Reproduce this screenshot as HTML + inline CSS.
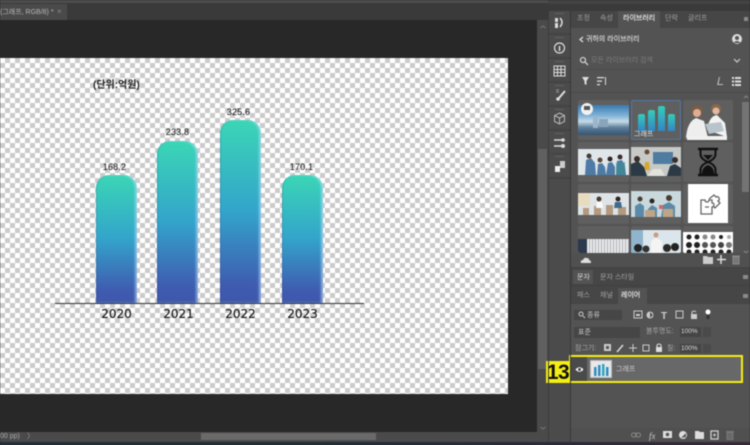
<!DOCTYPE html>
<html><head><meta charset="utf-8">
<style>
*{box-sizing:border-box}
html,body{margin:0;padding:0;background:#282828}
#r{width:750px;height:445px;overflow:hidden;background:#282828;position:relative;font-family:"Liberation Sans","Noto Sans CJK KR",sans-serif;filter:blur(.4px)}
.a{position:absolute}
.t{position:absolute;white-space:nowrap;line-height:1}
.bar{position:absolute;width:41px;border-radius:13px 13px 0 0;background:linear-gradient(#3bd6b6 0,#33a4cb 50%,#3f5cb0 90%,#3e57ab 100%);box-shadow:inset -2px 0 2px rgba(190,225,255,.6),inset 1px 0 1px rgba(40,60,120,.2)}
.val{position:absolute;font-size:9px;color:#111;text-align:center;width:41px;line-height:1;letter-spacing:.2px}
.yr{position:absolute;color:#111;text-align:center;width:41px;top:308px;line-height:1;font-family:"DejaVu Sans",sans-serif;font-size:12px;-webkit-text-stroke:.1px #111}
.tab{position:absolute;font-size:7px;color:#a0a0a0;line-height:1;white-space:nowrap}
.cell{position:absolute;background:#5f5f5f;border-radius:2px;overflow:hidden}
.dk{position:absolute;left:549px;width:21px;background:#4b4b4b}
.dk:before{content:"";position:absolute;left:6px;top:2px;width:9px;height:1px;background:#626262}
svg{position:absolute;overflow:visible}
</style></head><body><div id="r">

<!-- top -->
<div class="a" style="left:0;top:0;width:750px;height:4px;background:#4d4d4d"></div>
<div class="a" style="left:660px;top:0;width:12px;height:1px;background:#2a6cb0"></div>
<div class="a" style="left:0;top:3px;width:548px;height:17px;background:#3a3a3a"></div>
<div class="a" style="left:0;top:4px;width:67px;height:16px;background:#4a4a4a"></div>
<div class="t" style="left:0;top:8.500px;font-size:7px;color:#b8b8b8">(그래프, RGB/8) *</div>
<div class="t" style="left:57px;top:8px;font-size:8px;color:#8a8a8a">×</div>

<!-- document -->
<div class="a" style="left:0;top:58px;width:508px;height:336px;background-color:#fff;background-image:conic-gradient(#cbcbcb 25%,#fff 0 50%,#cbcbcb 0 75%,#fff 0);background-size:10px 10px"></div>
<div class="t" style="left:93px;top:81px;font-size:10px;font-weight:bold;color:#222">(단위:억원)</div>

<div class="bar" style="left:96px;top:175px;height:128px"></div>
<div class="bar" style="left:157px;top:141px;height:162px"></div>
<div class="bar" style="left:220px;top:120px;height:183px"></div>
<div class="bar" style="left:282px;top:175px;height:128px"></div>
<div class="a" style="left:55px;top:303px;width:309px;height:1px;background:#333"></div>

<div class="val" style="left:94px;top:163px">168.2</div>
<div class="val" style="left:157px;top:128px">233.8</div>
<div class="val" style="left:218px;top:108px">325.6</div>
<div class="val" style="left:281px;top:163px">170.1</div>
<div class="yr" style="left:96px">2020</div>
<div class="yr" style="left:158px">2021</div>
<div class="yr" style="left:220px">2022</div>
<div class="yr" style="left:282px">2023</div>

<!-- doc scrollbars -->
<div class="a" style="left:537px;top:20px;width:11px;height:412px;background:#4a4a4a"></div>
<div class="a" style="left:538px;top:149px;width:9px;height:220px;background:#606060"></div>
<svg style="left:540px;top:25px" width="6" height="4" fill="none" stroke="#777"><path d="M0.500 3l2.500-2 2.500 2"/></svg>
<svg style="left:540px;top:426px" width="6" height="4" fill="none" stroke="#777"><path d="M0.500 1l2.500 2 2.500-2"/></svg>
<div class="a" style="left:0;top:432px;width:548px;height:10px;background:#4a4a4a"></div>
<div class="a" style="left:201px;top:433px;width:175px;height:7px;background:#6a6a6a"></div>
<div class="t" style="left:0;top:433px;font-size:7px;color:#aaa">00 pp)</div>
<div class="t" style="left:27px;top:433px;font-size:7px;color:#999">〉</div>
<div class="a" style="left:0;top:442px;width:750px;height:3px;background:linear-gradient(90deg,#22303a,#1f3038 40%,#2a2c3c 70%,#3a2a3a)"></div>

<!-- right chrome -->
<div class="a" style="left:548px;top:0;width:202px;height:442px;background:#434343"></div>
<div class="a" style="left:548px;top:4px;width:202px;height:7px;background:#3a3a3a"></div>

<!-- dock -->
<div class="dk" style="top:11px;height:22px"></div>
<div class="dk" style="top:35px;height:22px"></div>
<div class="dk" style="top:59px;height:22px"></div>
<div class="dk" style="top:83px;height:22px"></div>
<div class="dk" style="top:107px;height:22px"></div>
<div class="dk" style="top:131px;height:22px"></div>
<div class="dk" style="top:154px;height:23px"></div>
<div class="a" style="left:549px;top:179px;width:21px;height:263px;background:#4b4b4b"></div>
<svg style="left:549px;top:11px" width="21" height="170" fill="none" stroke="#ddd">
 <rect x="6" y="7" width="3" height="4" fill="#ddd" stroke="none"/><rect x="6" y="12" width="3" height="5" fill="#ddd" stroke="none"/><path d="M11 7q4 4 0 9" stroke-width="1.500"/>
 <circle cx="10.500" cy="37" r="5" stroke-width="1.200"/><path d="M10.500 35v5" stroke-width="1.500"/>
 <path d="M5 55h11v10H5zM5 58.500h11M5 61.500h11M8.500 55v10M12 55v10" stroke-width="1"/>
 <path d="M7 79h3M7 81h3" stroke="#999"/><path d="M16 80l-6 7" stroke-width="2"/><circle cx="9" cy="88" r="1.800" fill="#ddd" stroke="none"/>
 <path d="M10.500 102l5 2.500v6l-5 2.500-5-2.500v-6zM5.500 104.500l5 2.500 5-2.500M10.500 107v6" stroke="#bbb"/>
 <path d="M5 129h8M5 135h8" stroke-width="1.500"/><circle cx="14" cy="129" r="1.800" fill="#ddd" stroke="none"/><circle cx="14" cy="135" r="2" fill="#ddd" stroke="none"/>
 <rect x="11" y="150" width="5" height="7" fill="#ccc" stroke="none"/><rect x="6" y="155" width="5" height="6" fill="#eee" stroke="none"/>
</svg>

<!-- library panel -->
<div class="a" style="left:571px;top:11px;width:179px;height:255px;background:#535353"></div>
<div class="a" style="left:571px;top:11px;width:179px;height:17px;background:#464646"></div>
<div class="a" style="left:618px;top:11px;width:42px;height:17px;background:#535353"></div>
<div class="tab" style="left:577px;top:15px">조정</div>
<div class="tab" style="left:600px;top:15px">속성</div>
<div class="tab" style="left:623px;top:15px;color:#e2e2e2;-webkit-text-stroke:.2px #e2e2e2">라이브러리</div>
<div class="tab" style="left:665px;top:15px">단락</div>
<div class="tab" style="left:688px;top:15px">글리프</div>
<div class="a" style="left:744px;top:17px;width:4px;height:4px;background:#8a8a8a"></div>

<svg style="left:579px;top:36px" width="5" height="7" fill="none" stroke="#ddd" stroke-width="1.300"><path d="M4 1L1 3.500 4 6"/></svg>
<div class="tab" style="left:586px;top:36px;color:#d0d0d0;-webkit-text-stroke:.2px #d0d0d0">귀하의 라이브러리</div>
<svg style="left:731px;top:33px" width="12" height="12"><circle cx="6" cy="6" r="5" fill="#ddd"/><circle cx="6" cy="5" r="2" fill="#535353"/><path d="M2.500 10q3.500-4 7 0" fill="#535353"/></svg>
<svg style="left:579px;top:56px" width="10" height="10" fill="none" stroke="#ccc" stroke-width="1.300"><circle cx="4" cy="4" r="2.500"/><path d="M6 6l3 3"/></svg>
<div class="tab" style="left:591px;top:56.500px;color:#7c7c7c">모든 라이브러리 검색</div>
<svg style="left:733px;top:58px" width="8" height="6" fill="none" stroke="#ccc" stroke-width="1.200"><path d="M1 1l3 3 3-3"/></svg>
<div class="a" style="left:577px;top:69px;width:164px;height:1px;background:#4a4a4a"></div>
<svg style="left:582px;top:76px" width="170" height="11" fill="#ddd">
 <path d="M0 1h7L4.500 5v4l-2-1V5z"/>
 <path d="M15 1h7v1.200h-7zM15 4.500h5v1.200h-5zM15 8h3v1.200h-3zM23 1h1v8h-1z"/>
 <path d="M137 1l-2 8h6v-1h-4.500l1.500-7z" fill="#bbb"/>
 <path d="M150 1h2v2h-2zM153 1h6v2h-6zM150 4.500h2v2h-2zM153 4.500h6v2h-6zM150 8h2v2h-2zM153 8h6v2h-6z"/>
</svg>
<div class="a" style="left:571px;top:92px;width:179px;height:1px;background:#4a4a4a"></div>

<!-- thumbs row 1 -->
<div class="cell" style="left:578px;top:100px;width:51px;height:40px">
 <div class="a" style="left:0;top:5px;width:51px;height:30px;background:linear-gradient(#3a7ab0 0,#7fb2d6 35%,#c6dbe8 55%,#5d7f9c 75%,#34556f 100%)"></div>
 <div class="a" style="left:15px;top:17px;width:5px;height:11px;background:#9bb5c9"></div>
 <div class="a" style="left:21px;top:19px;width:9px;height:8px;background:#8aa5bb"></div>
 <div class="a" style="left:3px;top:3px;width:12px;height:12px;border-radius:50%;background:#f2f2f2"></div>
 <div class="a" style="left:6px;top:6px;width:6px;height:4px;background:#555"></div>
</div>
<div class="cell" style="left:631px;top:100px;width:50px;height:40px;border:1px solid #4f7ba8">
 <div class="a" style="left:6px;top:13px;width:7px;height:17px;border-radius:2px 2px 0 0;background:linear-gradient(#35cdb8,#2f87c8)"></div>
 <div class="a" style="left:16px;top:9px;width:7px;height:21px;border-radius:2px 2px 0 0;background:linear-gradient(#35cdb8,#2f87c8)"></div>
 <div class="a" style="left:26px;top:5px;width:7px;height:25px;border-radius:2px 2px 0 0;background:linear-gradient(#35cdb8,#2f87c8)"></div>
 <div class="a" style="left:36px;top:13px;width:7px;height:17px;border-radius:2px 2px 0 0;background:linear-gradient(#35cdb8,#2f87c8)"></div>
 <div class="t" style="left:2px;top:30px;font-size:7px;color:#e8e8e8">그래프</div>
</div>
<div class="cell" style="left:683px;top:100px;width:50px;height:40px">
 <svg style="left:0;top:0" width="50" height="40">
  <path d="M3 38q1-16 10-20l8 3 4 17z" fill="#eee"/><circle cx="14" cy="11" r="6" fill="#7a5b45"/><circle cx="14" cy="13" r="4" fill="#dcae96"/>
  <path d="M24 30q2-14 10-15l8 8 2 14z" fill="#f2f2f2"/><circle cx="33" cy="9" r="5" fill="#8a6a4a"/><circle cx="33" cy="11" r="3.500" fill="#e2b8a0"/>
  <path d="M22 24l16-2 3 9-15 3z" fill="#b8c4cc"/><path d="M4 36h40v4H4z" fill="#f0f0f0"/>
 </svg>
</div>
<!-- row 2 -->
<div class="cell" style="left:578px;top:142px;width:51px;height:40px">
 <svg style="left:0;top:7px" width="51" height="26"><rect width="51" height="26" fill="#dfe6ea"/><path d="M7 26l1-15 5-2 4 5 1 12zM19 26l1-11 4-1 3 4 1 8zM28 26l2-12 4-1 3 5v8zM38 26l1-14 5-1 3 6 1 9z" fill="#4e7ba6"/><circle cx="11" cy="7" r="2.500" fill="#4a3a30"/><circle cx="22" cy="11" r="2.500" fill="#5a4636"/><circle cx="32" cy="10" r="2.500" fill="#2e2622"/><circle cx="42" cy="8" r="2.500" fill="#3a2e28"/><path d="M38 26V14l9-1v13z" fill="#3d8d94" opacity=".7"/></svg>
</div>
<div class="cell" style="left:631px;top:142px;width:50px;height:40px">
 <svg style="left:0;top:5px" width="50" height="29"><rect width="50" height="29" fill="#c6c9c6"/><rect x="22" y="5" width="20" height="12" fill="#4f7da2"/><path d="M14 15h4l1 8h-6z" fill="#d8a62e"/><circle cx="16" cy="5" r="2.500" fill="#6b4a32"/><path d="M0 29V17l7-3 6 6 3 9zM36 29l3-10 5-2 6 4v8z" fill="#2c3a45"/><circle cx="6" cy="12" r="3" fill="#3a2e28"/><circle cx="44" cy="13" r="3" fill="#3a2e28"/><path d="M16 29l6-7h8l4 7z" fill="#e2e2dc"/></svg>
</div>
<div class="cell" style="left:683px;top:142px;width:50px;height:40px">
 <svg style="left:0;top:0" width="50" height="40"><path d="M15 7h20M15 33h20" stroke="#111" stroke-width="2.500"/><path d="M17.500 8v4q0 5 7.500 8 7.500-3 7.500-8V8M17.500 32v-4q0-5 7.500-8 7.500 3 7.500 8v4" fill="none" stroke="#111" stroke-width="2"/><path d="M19 32q0-7 6-9 6 2 6 9z" fill="#111"/><path d="M20 13h10l-5 5z" fill="#111"/></svg>
</div>
<!-- row 3 -->
<div class="cell" style="left:578px;top:184px;width:51px;height:40px">
 <svg style="left:0;top:9px" width="51" height="22"><rect width="51" height="22" fill="#dde3e6"/><rect x="0" y="0" width="12" height="13" fill="#e8dcc0"/><path d="M5 22v-7h6v7zM16 22v-9h7v9zM28 22v-10h7v10zM40 22v-8h8v8z" fill="#b39a7e"/><circle cx="21" cy="6" r="2.500" fill="#4a3a30"/><path d="M18 15l1-6h5l1 6z" fill="#fafafa"/><path d="M36 15l1-6h6l1 6z" fill="#3e6a8c"/><circle cx="40" cy="6" r="2.500" fill="#2e2622"/></svg>
</div>
<div class="cell" style="left:631px;top:184px;width:50px;height:40px">
 <svg style="left:0;top:7px" width="50" height="26"><rect width="50" height="26" fill="#c8d8dc"/><path d="M4 26V15l5-3 4 3v11zM17 18l4-4 5 3v9h-9zM32 14l6-3 6 4v11H30z" fill="#5b8aa8"/><circle cx="9" cy="8" r="2.500" fill="#4a3a30"/><circle cx="21" cy="10" r="2.500" fill="#2e2622"/><circle cx="38" cy="7" r="3" fill="#4a3a30"/><path d="M14 26v-7h10v7zM32 26v-8h10v8z" fill="#bfa587"/><rect x="28" y="14" width="4" height="4" fill="#d06a6a"/></svg>
</div>
<div class="cell" style="left:683px;top:184px;width:50px;height:40px">
 <div class="a" style="left:5px;top:0;width:40px;height:39px;background:#fff"></div>
 <svg style="left:17px;top:11px" width="22" height="20" fill="none" stroke="#666" stroke-width="1.300"><path d="M1 5h4q0 2 2 2t2-2h3v3q2 0 2 2t-2 2v7H1z"/><path d="M9 4l5-4 2 2q2-1 3 1t-1 3l2 2-5 5-2-2"/><path d="M5 12h4"/></svg>
</div>
<!-- row 4 -->
<div class="cell" style="left:578px;top:226px;width:51px;height:27px">
 <div class="a" style="left:0;top:13px;width:51px;height:14px;background:repeating-linear-gradient(90deg,#e8e8ea 0 2px,#b0b4bc 2px 3px)"></div>
 <div class="a" style="left:0;top:13px;width:9px;height:14px;background:#2a3a4c"></div>
</div>
<div class="cell" style="left:631px;top:226px;width:50px;height:27px">
 <svg style="left:0;top:4px" width="50" height="23"><rect width="50" height="23" fill="#dbe6ec"/><rect x="0" y="0" width="12" height="23" fill="#8fb4cc"/><path d="M20 23V11l5-3 6 3v12z" fill="#f4f4f4"/><circle cx="25" cy="5" r="2.500" fill="#c99b80"/><circle cx="7" cy="18" r="4" fill="#222"/><circle cx="15" cy="19" r="3.500" fill="#333"/><circle cx="36" cy="18" r="4" fill="#2a2a2a"/><circle cx="44" cy="17" r="4" fill="#222"/></svg>
</div>
<div class="cell" style="left:683px;top:226px;width:50px;height:27px">
 <div class="a" style="left:0;top:6px;width:50px;height:21px;background:#fff"></div>
 <svg style="left:0;top:6px" width="50" height="21" fill="#222"><circle cx="6" cy="5" r="2.500"/><circle cx="14" cy="5" r="2.500"/><circle cx="22" cy="5" r="2.500" fill="#888"/><circle cx="30" cy="5" r="2.500" fill="#888"/><circle cx="38" cy="5" r="2"/><circle cx="46" cy="5" r="2" fill="#aaa"/><circle cx="6" cy="13" r="3"/><circle cx="14" cy="13" r="3"/><circle cx="22" cy="13" r="3" fill="#555"/><circle cx="30" cy="13" r="3" fill="#555"/><circle cx="38" cy="13" r="3" fill="#444"/><circle cx="46" cy="13" r="3" fill="#777"/><circle cx="6" cy="20" r="2.500"/><circle cx="14" cy="20" r="2.500"/><circle cx="22" cy="20" r="2.500"/><circle cx="30" cy="20" r="2.500"/><circle cx="38" cy="20" r="2.500"/><circle cx="46" cy="20" r="2.500"/></svg>
</div>
<!-- lib scroll -->
<div class="a" style="left:742px;top:102px;width:7px;height:90px;background:#747474"></div>
<svg style="left:743px;top:95px" width="6" height="160" fill="none" stroke="#888"><path d="M1 3l2-2 2 2M1 156l2 2 2-2"/></svg>
<!-- lib footer -->
<div class="a" style="left:571px;top:253px;width:179px;height:14px;background:#505050"></div>
<svg style="left:580px;top:256px" width="12" height="8" fill="#ddd"><path d="M1 7q-1-3 2-3 1-3 4-2 2 0 2 2 2 0 2 3z"/></svg>
<svg style="left:703px;top:255px" width="40" height="10"><path d="M0 1h4l1 1h5v7H0z" fill="#ccc"/><path d="M18 0v9M14 4.500h9" stroke="#ddd" stroke-width="1.500"/><path d="M30 2h6v7h-6zM29 1h8" stroke="#888" fill="#777"/></svg>

<!-- char panel -->
<div class="a" style="left:571px;top:269px;width:179px;height:15px;background:#464646"></div>
<div class="a" style="left:573px;top:270px;width:20px;height:14px;background:#535353"></div>
<div class="tab" style="left:577px;top:273.500px;color:#ddd">문자</div>
<div class="tab" style="left:600px;top:273.500px">문자 스타일</div>
<div class="a" style="left:743px;top:275px;width:5px;height:4px;background:#8a8a8a"></div>

<!-- layers panel -->
<div class="a" style="left:571px;top:287px;width:179px;height:155px;background:#535353"></div>
<div class="a" style="left:571px;top:287px;width:179px;height:17px;background:#464646"></div>
<div class="a" style="left:618px;top:288px;width:29px;height:16px;background:#535353"></div>
<div class="tab" style="left:577px;top:291.500px">패스</div>
<div class="tab" style="left:600px;top:291.500px">채널</div>
<div class="tab" style="left:621px;top:291.500px;color:#e2e2e2;-webkit-text-stroke:.2px #e2e2e2">레이어</div>
<div class="a" style="left:743px;top:294px;width:5px;height:4px;background:#8a8a8a"></div>

<div class="a" style="left:574px;top:310px;width:48px;height:10px;background:#464646"></div>
<svg style="left:578px;top:311px" width="8" height="8" fill="none" stroke="#ccc"><circle cx="3" cy="3" r="2"/><path d="M5 5l2 2"/></svg>
<div class="tab" style="left:587px;top:311.500px;color:#ccc">종류</div>
<svg style="left:633px;top:309px" width="85" height="14">
 <rect x="1" y="2" width="8" height="7" fill="none" stroke="#ccc"/><rect x="3" y="5" width="4" height="2" fill="#ccc"/>
 <circle cx="17" cy="6" r="3.500" fill="#ccc"/><path d="M17 3v6l3-3z" fill="#535353"/>
 <text x="28" y="10" font-size="10" font-weight="bold" fill="#ccc" font-family="Liberation Sans">T</text>
 <rect x="43" y="2" width="7" height="7" fill="none" stroke="#ccc"/>
 <rect x="58" y="5" width="6" height="5" fill="#ccc"/><path d="M59 5V3q2-2 4 0" stroke="#ccc" fill="none"/>
 <circle cx="75" cy="3" r="2.500" fill="#fff"/><rect x="73.500" y="6" width="3" height="4" fill="#333"/>
</svg>
<div class="a" style="left:574px;top:327px;width:66px;height:11px;background:#464646"></div>
<div class="tab" style="left:578px;top:329px;color:#ccc">표준</div>
<div class="tab" style="left:646px;top:328px;color:#a8a8a8">불투명도:</div>
<div class="a" style="left:680px;top:327px;width:21px;height:10px;background:#454545"></div>
<div class="t" style="left:681px;top:329px;font-size:6.500px;color:#ddd">100%</div>
<div class="a" style="left:703px;top:327px;width:8px;height:10px;background:#4a4a4a"></div>

<div class="tab" style="left:575px;top:344.500px;color:#a8a8a8">잠그기:</div>
<svg style="left:603px;top:342px" width="70" height="12">
 <rect x="1" y="2" width="7" height="7" fill="#ccc"/><rect x="3" y="4" width="3" height="3" fill="#555"/>
 <path d="M14 10l6-7" stroke="#ddd" stroke-width="1.500"/>
 <path d="M30 2v8M26 6h8" stroke="#ccc"/>
 <rect x="40" y="3" width="6" height="6" fill="none" stroke="#ccc"/>
 <rect x="53" y="5" width="6" height="5" fill="#ddd"/><path d="M54 5V3q2-2 4 0v2" stroke="#ddd" fill="none"/>
</svg>
<div class="tab" style="left:667px;top:344.500px;color:#a8a8a8">칠:</div>
<div class="a" style="left:680px;top:344px;width:21px;height:9px;background:#454545"></div>
<div class="t" style="left:681px;top:345.500px;font-size:6.500px;color:#ddd">100%</div>
<div class="a" style="left:703px;top:344px;width:8px;height:9px;background:#4a4a4a"></div>

<!-- layer row -->
<div class="a" style="left:571px;top:357px;width:170px;height:24px;background:#686868;box-shadow:0 0 0 2px #f5ee13"></div>
<div class="a" style="left:571px;top:357px;width:16px;height:24px;background:#4a4a4a"></div>
<svg style="left:575px;top:366px" width="10" height="7"><path d="M0.500 3.500q4-4.500 8 0q-4 4.500-8 0z" fill="#fff"/><circle cx="4.500" cy="3.500" r="1.500" fill="#444"/></svg>
<div class="a" style="left:590px;top:360px;width:22px;height:18px;background:#e8e8e8;border:1px solid #bbb"></div>
<svg style="left:593px;top:363px" width="16" height="13" fill="#2f8cc2"><rect x="1" y="4" width="2.500" height="9"/><rect x="5" y="2" width="2.500" height="11"/><rect x="9" y="1" width="2.500" height="12" fill="#2ba9bf"/><rect x="13" y="4" width="2.500" height="9"/></svg>
<div class="tab" style="left:616px;top:365.500px;color:#cfcfcf">그래프</div>

<!-- 13 label -->
<div class="a" style="left:546px;top:361px;width:24px;height:22px;background:#f5ee13"></div>
<div class="t" style="left:546px;top:362px;width:24px;text-align:center;font-size:21px;font-weight:bold;color:#111;letter-spacing:-.5px">13</div>

<!-- layers footer -->
<div class="a" style="left:571px;top:428px;width:179px;height:14px;background:#505050"></div>
<svg style="left:631px;top:430px" width="100" height="12">
 <rect x="0.500" y="3" width="5" height="4" rx="2" fill="none" stroke="#888"/><rect x="4.500" y="3" width="5" height="4" rx="2" fill="none" stroke="#888"/>
 <text x="18" y="9" font-size="9" font-style="italic" fill="#ccc" font-family="Liberation Serif">fx</text>
 <rect x="32" y="1" width="9" height="7" fill="#ddd"/><circle cx="36.500" cy="4.500" r="1.800" fill="#555"/>
 <circle cx="52" cy="5" r="4" fill="#ddd"/><path d="M50 8l5-5v4z" fill="#555"/>
 <path d="M64 1h4l1 1h4v7h-9z" fill="#ddd"/>
 <rect x="80" y="1" width="7" height="8" fill="none" stroke="#ccc" stroke-width="1.300"/><path d="M83.500 3.500v3M82 5h3" stroke="#ccc"/>
 <path d="M96 2.500h6v7h-6zM95 1.500h8" stroke="#777" fill="#6a6a6a"/>
</svg>

<!-- dark dividers -->
<div class="a" style="left:570px;top:11px;width:1px;height:431px;background:#383838"></div>
<div class="a" style="left:548px;top:11px;width:1px;height:431px;background:#3c3c3c"></div>
</div></body></html>
